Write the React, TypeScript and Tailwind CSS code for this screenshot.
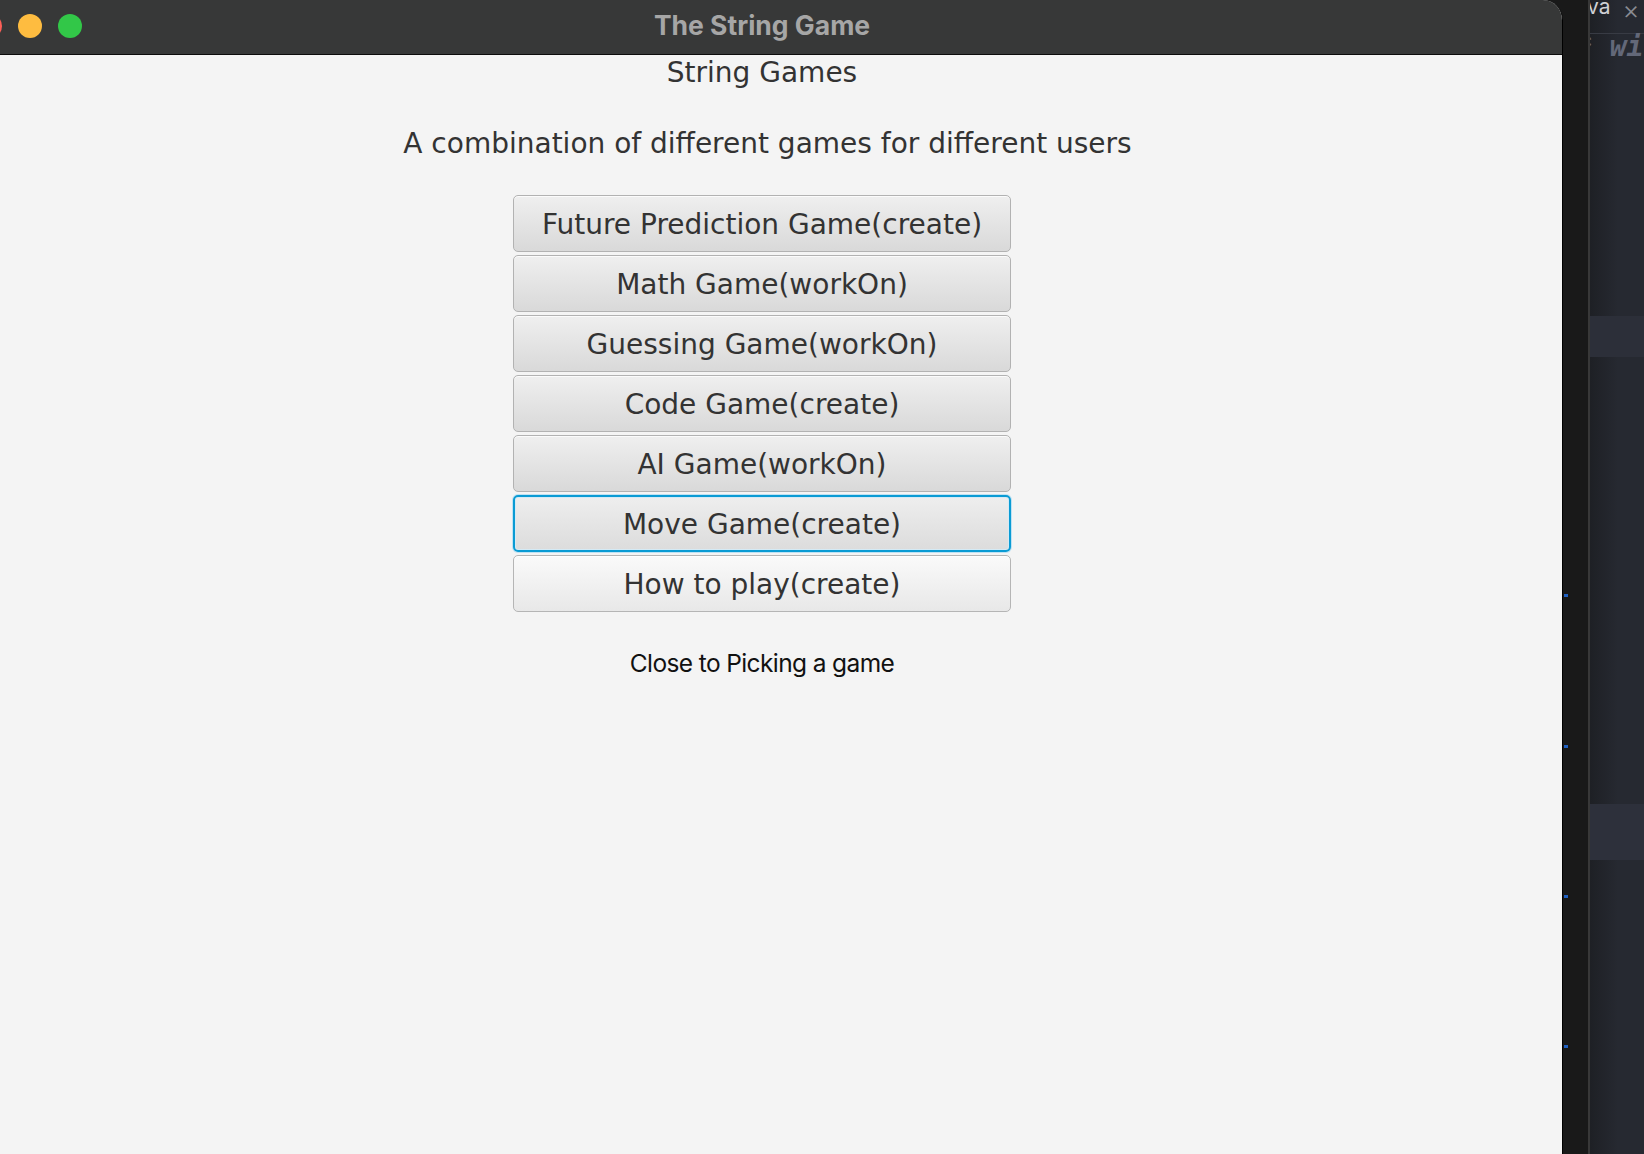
import React from "react";

type Btn = { label: string; state: "normal" | "focus" | "hover" };

const games: Btn[] = [
  { label: "Future Prediction Game(create)", state: "normal" },
  { label: "Math Game(workOn)", state: "normal" },
  { label: "Guessing Game(workOn)", state: "normal" },
  { label: "Code Game(create)", state: "normal" },
  { label: "AI Game(workOn)", state: "normal" },
  { label: "Move Game(create)", state: "focus" },
  { label: "How to play(create)", state: "hover" },
];

function GameButton({ b }: { b: Btn }) {
  if (b.state === "focus") {
    return (
      <button className="flex h-[57px] w-full items-center justify-center rounded-[5px] border-2 border-[#0a9bd4] bg-gradient-to-b from-[#eeeeee] to-[#dcdcdc] pt-[1px] text-[#333333] shadow-[0_0_0_1px_#bfe2f3,inset_0_0_0_1px_#d4eaf5]">
        {b.label}
      </button>
    );
  }
  if (b.state === "hover") {
    return (
      <button className="flex h-[57px] w-full items-center justify-center rounded-[5px] border border-[#b5b5b5] bg-gradient-to-b from-[#fafafa] to-[#e8e8e8] pt-[1px] text-[#333333] shadow-[inset_0_1px_0_#ffffff]">
        {b.label}
      </button>
    );
  }
  return (
    <button className="flex h-[57px] w-full items-center justify-center rounded-[5px] border border-[#b2b2b2] bg-gradient-to-b from-[#efefef] to-[#d9d9d9] pt-[1px] text-[#333333] shadow-[inset_0_1px_0_#fbfbfb]">
      {b.label}
    </button>
  );
}

export default function App() {
  return (
    <div className="flex h-[1154px] w-[1644px] overflow-hidden bg-[#191919]">
      {/* Application window */}
      <div className="flex h-full w-[1563px] shrink-0 flex-col overflow-hidden rounded-tr-[20px] border-r border-black bg-[#f4f4f4]">
        {/* Title bar */}
        <div className="relative flex h-[55px] shrink-0 items-start justify-center border-b border-[#0c0c0c] bg-[#373838] pr-[38px] pt-[10px]">
          <div className="absolute left-[-22px] top-[14px] flex gap-[16px]">
            <span className="h-[24px] w-[24px] rounded-full bg-[#fe5f57]" />
            <span className="h-[24px] w-[24px] rounded-full bg-[#febc40]" />
            <span className="h-[24px] w-[24px] rounded-full bg-[#32c748]" />
          </div>
          <span className="font-['Inter'] text-[26.5px] font-bold leading-[30px] text-[#a6a6a6]">
            The String Game
          </span>
        </div>

        {/* Content */}
        <div className="flex flex-col items-center pr-[38px] pt-[1px] font-['DejaVu_Sans'] text-[28px] leading-[33px] text-[#333333]">
          <div>String Games</div>
          <div className="mt-[38px] ml-[11px]">A combination of different games for different users</div>
          <div className="mt-[35px] flex w-[498px] flex-col gap-[3px]">
            {games.map((g) => (
              <GameButton key={g.label} b={g} />
            ))}
          </div>
          <div className="mt-[37px] font-['Inter'] text-[24.5px] leading-[28px] tracking-[-0.025em] text-[#111111]">
            Close to Picking a game
          </div>
        </div>
      </div>

      {/* Dark gap between windows */}
      <div className="relative h-full w-[25px] shrink-0 bg-[#191919]">
        <span className="absolute left-[1px] top-[594px] h-[3px] w-[4px] bg-[#2060c0]" />
        <span className="absolute left-[1px] top-[745px] h-[3px] w-[4px] bg-[#2060c0]" />
        <span className="absolute left-[1px] top-[895px] h-[3px] w-[4px] bg-[#2060c0]" />
        <span className="absolute left-[1px] top-[1045px] h-[3px] w-[4px] bg-[#2060c0]" />
      </div>
      <div className="h-full w-[2px] shrink-0 bg-[#383838]" />

      {/* Editor behind */}
      <div className="flex h-full flex-1 flex-col overflow-hidden bg-[linear-gradient(to_right,#1e2025,#262931_28px)]">
        <div className="flex h-[34px] shrink-0 items-start border-b border-[#383b44]">
          <span className="-ml-[3px] -mt-[9px] font-['Inter'] text-[21px] text-[#cfd0d4]">va</span>
          <span className="ml-[12px] -mt-[10px] font-['Inter'] text-[26px] font-light text-[#8a8c93]">×</span>
        </div>
        <div className="-ml-[14px] -mt-[2px] whitespace-nowrap font-['DejaVu_Sans_Mono'] text-[28px] font-bold italic leading-[30px] text-[#636879]">
          * with
        </div>
        <div className="mt-[254px] h-[41px] bg-[#2c2f39]" />
        <div className="mt-[447px] h-[56px] bg-[#2d303b]" />
      </div>
    </div>
  );
}
